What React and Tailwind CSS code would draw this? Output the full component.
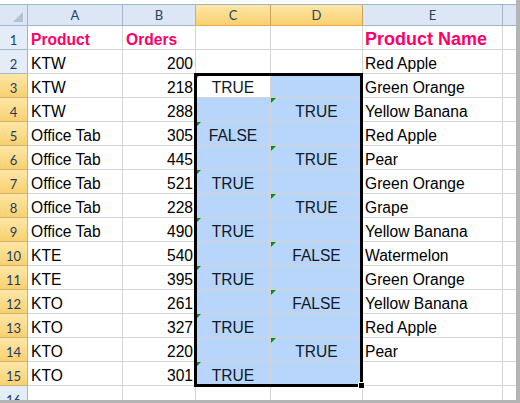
import React from "react";

const ROWS = [
  ["Product", "Orders", "", "", "Product Name"],
  ["KTW", "200", "", "", "Red Apple"],
  ["KTW", "218", "TRUE", "", "Green Orange"],
  ["KTW", "288", "", "TRUE", "Yellow Banana"],
  ["Office Tab", "305", "FALSE", "", "Red Apple"],
  ["Office Tab", "445", "", "TRUE", "Pear"],
  ["Office Tab", "521", "TRUE", "", "Green Orange"],
  ["Office Tab", "228", "", "TRUE", "Grape"],
  ["Office Tab", "490", "TRUE", "", "Yellow Banana"],
  ["KTE", "540", "", "FALSE", "Watermelon"],
  ["KTE", "395", "TRUE", "", "Green Orange"],
  ["KTO", "261", "", "FALSE", "Yellow Banana"],
  ["KTO", "327", "TRUE", "", "Red Apple"],
  ["KTO", "220", "", "TRUE", "Pear"],
  ["KTO", "301", "TRUE", "", ""],
  ["", "", "", "", ""],
];

const SEL_HDR = "bg-linear-to-b from-[#fde7a6] to-[#f9d06f]";
const NORM_HDR = "bg-[#dce6f4]";

function ColHeader({ w, label, sel }) {
  return (
    <div
      className={`${w} shrink-0 h-full flex items-center justify-center pt-[2px] border-r border-b ${
        sel ? `${SEL_HDR} border-r-[#c9a35c] border-b-[#e9ac3f]` : `${NORM_HDR} border-[#9eb6ce]`
      } text-[13px] text-[#27415f] font-['Lato','Open_Sans',sans-serif]`}
    >
      {label}
    </div>
  );
}

function Marker({ pink }) {
  return (
    <div
      className={`absolute top-0 left-0 w-0 h-0 border-t-[5px] border-r-[5px] border-r-transparent ${
        pink ? "border-t-[#d04fd0]" : "border-t-[#0f8a0f]"
      }`}
    />
  );
}

export default function App() {
  return (
    <div className="w-[520px] h-[403px] bg-[#b4b4b4] font-['Liberation_Sans',Arial,sans-serif]">
      <div className="relative w-[516px] h-[400px] bg-white overflow-hidden pt-[4px]">
        {/* header row */}
        <div className="flex h-[22px] border-t border-[#9eb6ce]">
          <div className={`w-[28px] shrink-0 h-full border-r border-b border-[#9eb6ce] ${NORM_HDR} flex items-end justify-end`}>
            <svg width="10" height="10" viewBox="0 0 10 10" className="mb-[3px] mr-[4px]">
              <polygon points="10,0 10,10 0,10" fill="#b3c1d3" />
            </svg>
          </div>
          <ColHeader w="w-[95px]" label="A" />
          <ColHeader w="w-[73px]" label="B" />
          <ColHeader w="w-[75px]" label="C" sel />
          <ColHeader w="w-[92px]" label="D" sel />
          <ColHeader w="w-[140px]" label="E" />
          <div className={`flex-1 h-full border-b border-[#9eb6ce] ${NORM_HDR}`} />
        </div>

        {ROWS.map((r, i) => {
          const n = i + 1;
          const rowSel = n >= 3 && n <= 15;
          const isHead = n === 1;
          const cBlue = rowSel && n !== 3;
          const dBlue = rowSel;
          return (
            <div key={n} className="flex h-[24px]">
              <div
                className={`w-[28px] shrink-0 h-full border-r border-b flex items-end justify-center leading-[18px] text-[13px] text-[#1f3b63] font-['Lato','Open_Sans',sans-serif] ${
                  rowSel
                    ? `${SEL_HDR} border-r-[#e9ac3f] border-b-[#d4b06a]`
                    : "bg-[#e4ecf7] border-[#9eb6ce]"
                }`}
              >
                {n}
              </div>
              {/* A */}
              <div
                className={`w-[95px] shrink-0 h-full border-r border-b border-[#d4d4d4] flex items-end pl-[3px] whitespace-nowrap ${
                  isHead ? "font-bold text-[#ff0066] text-[15.6px] leading-[18px]" : "text-black text-[15.6px] leading-[18px]"
                }`}
              >
                {r[0]}
              </div>
              {/* B */}
              <div
                className={`w-[73px] shrink-0 h-full border-r border-b border-[#d4d4d4] flex items-end whitespace-nowrap ${
                  isHead
                    ? "font-bold text-[#ff0066] text-[15.6px] leading-[18px] pl-[3px]"
                    : "justify-end pr-[2px] text-black text-[15.6px] leading-[18px]"
                }`}
              >
                {r[1]}
              </div>
              {/* C */}
              <div
                className={`relative w-[75px] shrink-0 h-full border-r border-b border-[#d4d4d4] flex items-end justify-center text-[15.6px] leading-[18px] text-[#111827] whitespace-nowrap ${
                  cBlue ? "bg-[#b8d6fb]" : "bg-white"
                }`}
              >
                {r[2] && <Marker pink={n === 3} />}
                {r[2]}
              </div>
              {/* D */}
              <div
                className={`relative w-[92px] shrink-0 h-full border-r border-b border-[#d4d4d4] flex items-end justify-center text-[15.6px] leading-[18px] text-[#111827] whitespace-nowrap ${
                  dBlue ? "bg-[#b8d6fb]" : "bg-white"
                }`}
              >
                {r[3] && <Marker />}
                {r[3]}
              </div>
              {/* E */}
              <div
                className={`w-[140px] shrink-0 h-full border-r border-b border-[#d4d4d4] flex items-end pl-[2px] whitespace-nowrap ${
                  isHead
                    ? "font-bold text-[#ff0066] text-[18px] leading-[20px]"
                    : "text-black text-[15.6px] leading-[18px]"
                }`}
              >
                {r[4]}
              </div>
              <div className="flex-1 h-full border-b border-[#d4d4d4]" />
            </div>
          );
        })}

        {/* selection outline */}
        <div className="absolute left-[194px] top-[73px] w-[169px] h-[314px] border-[3px] border-black pointer-events-none" />
        <div className="absolute left-[358px] top-[382px] w-[7px] h-[7px] bg-black border border-white pointer-events-none" />
      </div>
    </div>
  );
}
